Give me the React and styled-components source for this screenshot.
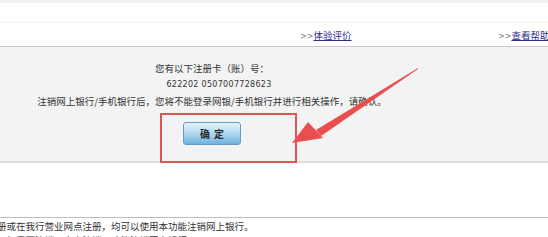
import React from "react";
import styled, { createGlobalStyle } from "styled-components";

const Global = createGlobalStyle`
  html, body {
    margin: 0;
    padding: 0;
    background: #fff;
    overflow: hidden;
  }
  body {
    font-family: "Noto Sans CJK SC", "DejaVu Sans", sans-serif;
    font-size: 9.5px;
    color: #333;
  }
`;

const Page = styled.div`
  position: relative;
  width: 548px;
  height: 237px;
  overflow: hidden;
`;

const TopStrip = styled.div`
  height: 3px;
  background: #f2f2f2;
`;

const BlankRow = styled.div`
  height: 19px;
  border-bottom: 1px solid #f0f0f0;
`;

const LinkRow = styled.div`
  height: 23px;
  display: flex;
  align-items: center;
  border-bottom: 1px solid #c8c8c8;
`;

const LinkItem = styled.span`
  position: relative;
  left: ${(p) => p.$left}px;
  width: 0;
  white-space: nowrap;
  color: #777;
  font-family: "DejaVu Sans", sans-serif;
  font-size: 8px;
  a {
    font-family: "Noto Sans CJK SC", sans-serif;
    font-size: 9.5px;
    color: #2c2c8c;
    text-decoration: underline;
  }
`;

const Panel = styled.div`
  height: 114px;
  background: #f3f3f3;
  border-bottom: 2px solid #dedede;
`;

const Column = styled.div`
  width: 424px;
  display: flex;
  flex-direction: column;
  align-items: center;
  padding-top: 13px;
`;

const Line = styled.div`
  height: 16.5px;
  line-height: 16.5px;
  white-space: nowrap;
  padding-left: ${(p) => p.$shift || 0}px;
`;

const Number = styled(Line)`
  font-family: "DejaVu Sans", sans-serif;
  font-size: 8px;
  letter-spacing: 0.3px;
  padding-right: 8px;
`;

const Button = styled.button`
  margin-top: 12px;
  width: 58px;
  height: 23px;
  border: 1px solid #6a9cc3;
  border-radius: 3px;
  background: linear-gradient(#e4f3fb 0%, #b4dbf1 45%, #6fb3df 100%);
  font-family: "Noto Sans CJK SC", sans-serif;
  font-size: 10px;
  font-weight: bold;
  color: #2a2a2a;
  letter-spacing: 4px;
  padding: 0 0 0 4px;
`;

const Gap = styled.div`
  height: 54px;
  border-bottom: 1px solid #bdbdbd;
`;

const Note = styled.div`
  margin-left: -3px;
  line-height: 12px;
  padding-top: 2px;
  white-space: nowrap;
`;

const Highlight = styled.div`
  position: absolute;
  left: 160px;
  top: 113px;
  width: 133px;
  height: 46px;
  border: 2px solid #dc5656;
`;

const Arrow = styled.svg`
  position: absolute;
  left: 0;
  top: 0;
  pointer-events: none;
`;

export default function App() {
  return (
    <Page>
      <Global />
      <TopStrip />
      <BlankRow />
      <LinkRow>
        <LinkItem $left={300}>
          &gt;&gt;<a>体验评价</a>
        </LinkItem>
        <LinkItem $left={498}>
          &gt;&gt;<a>查看帮助</a>
        </LinkItem>
      </LinkRow>
      <Panel>
        <Column>
          <Line>您有以下注册卡（账）号：</Line>
          <Number $shift={22}>622202 0507007728623</Number>
          <Line>注销网上银行/手机银行后，您将不能登录网银/手机银行并进行相关操作，请确认。</Line>
          <Button>确定</Button>
        </Column>
      </Panel>
      <Gap />
      <Note>册或在我行营业网点注册，均可以使用本功能注销网上银行。</Note>
      <Note>　如需要注销，点击注销，才能注销网上银行。</Note>
      <Highlight />
      <Arrow width="548" height="237" viewBox="0 0 548 237">
        <polygon
          points="418,68 316,130 321,136 418,69"
          fill="#ea4f4f"
        />
        <polygon points="292,143 308,122 323,138" fill="#ea4f4f" />
      </Arrow>
    </Page>
  );
}
